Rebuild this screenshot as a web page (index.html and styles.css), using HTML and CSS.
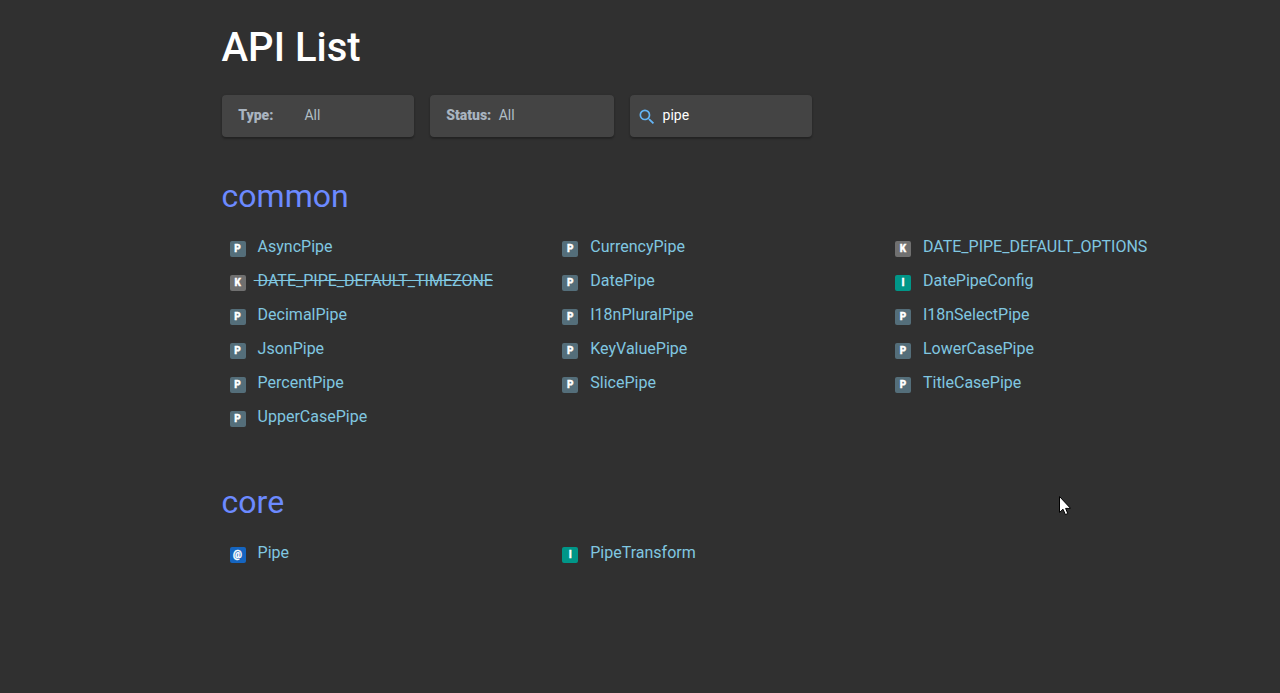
FILE: index.html
```html
<!DOCTYPE html>
<html lang="en">
<head>
<meta charset="utf-8">
<title>API List</title>
<link rel="stylesheet" href="styles.css">
</head>
<body>
<main class="page">
  <h1 class="title">API List</h1>
  <div class="filters">
    <div class="filter filter-type"><span class="label">Type:</span><span class="value value-type">All</span></div>
    <div class="filter filter-status"><span class="label">Status:</span><span class="value value-status">All</span></div>
    <div class="filter filter-search">
      <svg class="search-icon" viewBox="0 0 24 24" width="20" height="20"><path fill="#64b5f6" d="M15.5 14h-.79l-.28-.27A6.47 6.47 0 0 0 16 9.5 6.5 6.5 0 1 0 9.5 16c1.61 0 3.09-.59 4.23-1.57l.27.28v.79l5 4.99L20.49 19l-4.99-5zm-6 0C7.01 14 5 11.99 5 9.5S7.01 5 9.5 5 14 7.01 14 9.5 11.99 14 9.5 14z"/></svg>
      <span class="query">pipe</span>
    </div>
  </div>

  <section class="group group-common">
    <h2 class="group-title">common</h2>
    <ul class="api-list">
      <li class="item"><span class="sym sym-p">P</span><a class="link">AsyncPipe</a></li>
      <li class="item"><span class="sym sym-p">P</span><a class="link">CurrencyPipe</a></li>
      <li class="item"><span class="sym sym-k">K</span><a class="link">DATE_PIPE_DEFAULT_OPTIONS</a></li>
      <li class="item"><span class="sym sym-k">K</span><a class="link deprecated">&nbsp;DATE_PIPE_DEFAULT_TIMEZONE</a></li>
      <li class="item"><span class="sym sym-p">P</span><a class="link">DatePipe</a></li>
      <li class="item"><span class="sym sym-i">I</span><a class="link">DatePipeConfig</a></li>
      <li class="item"><span class="sym sym-p">P</span><a class="link">DecimalPipe</a></li>
      <li class="item"><span class="sym sym-p">P</span><a class="link">I18nPluralPipe</a></li>
      <li class="item"><span class="sym sym-p">P</span><a class="link">I18nSelectPipe</a></li>
      <li class="item"><span class="sym sym-p">P</span><a class="link">JsonPipe</a></li>
      <li class="item"><span class="sym sym-p">P</span><a class="link">KeyValuePipe</a></li>
      <li class="item"><span class="sym sym-p">P</span><a class="link">LowerCasePipe</a></li>
      <li class="item"><span class="sym sym-p">P</span><a class="link">PercentPipe</a></li>
      <li class="item"><span class="sym sym-p">P</span><a class="link">SlicePipe</a></li>
      <li class="item"><span class="sym sym-p">P</span><a class="link">TitleCasePipe</a></li>
      <li class="item"><span class="sym sym-p">P</span><a class="link">UpperCasePipe</a></li>
    </ul>
  </section>

  <section class="group group-core">
    <h2 class="group-title">core</h2>
    <ul class="api-list">
      <li class="item"><span class="sym sym-d">@</span><a class="link">Pipe</a></li>
      <li class="item"><span class="sym sym-i">I</span><a class="link">PipeTransform</a></li>
    </ul>
  </section>
</main>
<svg class="cursor" width="12" height="20" viewBox="0 0 12 20"><path d="M0.5 0.5V16.5L4 13.2L6.4 18.6L8.8 17.5L6.6 12.4H11.6Z" fill="#fff" stroke="#000" stroke-width="1"/></svg>
</body>
</html>
```
FILE: styles.css
```css
* { box-sizing: border-box; }
html, body { height: 100%; }
body {
  margin: 0;
  background: #303030;
  font-family: Roboto, "Liberation Sans", sans-serif;
  overflow: hidden;
}
.page { padding: 23px 60.4px 0 221.6px; }
.title {
  margin: 0;
  font-size: 40px;
  line-height: 50px;
  font-weight: 500;
  color: #fff;
}
.filters { display: flex; gap: 16px; margin-top: 22px; }
.filter {
  display: flex;
  align-items: center;
  height: 42px;
  padding-bottom: 2px;
  background: #444;
  border-radius: 4px;
  box-shadow: 0 2px 2px rgba(0,0,0,.24), 0 0 2px rgba(0,0,0,.12);
  font-size: 14px;
}
.filter-type { width: 192px; padding-left: 16.6px; }
.filter-status { width: 184px; padding-left: 16.6px; }
.filter-search { width: 182px; padding-left: 7.5px; }
.label { font-weight: 900; color: #a9b4c0; }
.value { color: #b0bec5; }
.value-type { margin-left: 31px; }
.value-status { margin-left: 7.4px; }
.search-icon { margin-top: 4px; }
.query { margin-left: 5.5px; color: #fff; }
.group-common { margin-top: 39px; }
.group-core { margin-top: 43px; }
.group-title {
  margin: 0;
  font-size: 32px;
  line-height: 40px;
  font-weight: 400;
  color: #6c8aff;
}
.api-list {
  display: grid;
  grid-template-columns: repeat(3, 1fr);
  grid-auto-rows: 34px;
  margin: 19px 0 0;
  padding: 0;
  list-style: none;
}
.item { display: flex; align-items: flex-start; padding-left: 8px; }
.sym {
  flex: none;
  width: 16px;
  height: 16px;
  margin-top: 6px;
  border-radius: 2px;
  color: #fff;
  font-size: 10px;
  font-weight: 900;
  line-height: 16px;
  text-align: center;
  -webkit-text-stroke: .3px #fff;
}
.sym-p { background: #546e7a; }
.sym-k { background: #707070; }
.sym-i { background: #009688; }
.sym-d { background: #1565c0; }
.link {
  margin-left: 12px;
  font-size: 16px;
  line-height: 24px;
  color: #80c7e0;
}
.deprecated { margin-left: 8px; text-decoration: line-through; }
.cursor { position: absolute; left: 1059px; top: 496px; }
```
